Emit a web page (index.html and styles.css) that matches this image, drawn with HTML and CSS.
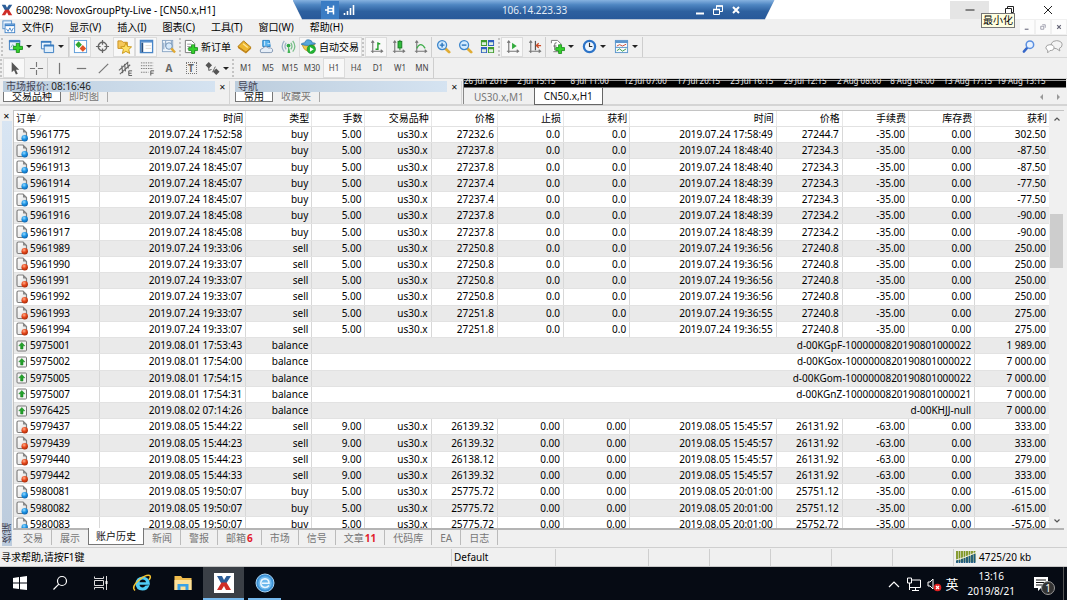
FILE: index.html
```
<!DOCTYPE html>
<html lang="zh-CN">
<head>
    <meta charset="UTF-8">
    <meta name="viewport" content="width=device-width, initial-scale=1.0">
    <title>600298: NovoxGroupPty-Live</title>
    <link rel="stylesheet" href="styles.css">
</head>
<body>
    <!-- shared icons -->
    <svg class="defs" width="0" height="0" aria-hidden="true">
        <defs>
            <radialGradient id="blueBall" cx="40%" cy="30%" r="70%"><stop offset="0" stop-color="#9bdcff"/><stop offset="0.5" stop-color="#1e96e6"/><stop offset="1" stop-color="#0c62ad"/></radialGradient>
            <radialGradient id="redBall" cx="40%" cy="30%" r="70%"><stop offset="0" stop-color="#ffb08c"/><stop offset="0.5" stop-color="#e84a1e"/><stop offset="1" stop-color="#a82806"/></radialGradient>
            <linearGradient id="page" x2="1" y2="1"><stop offset="0" stop-color="#fff"/><stop offset="1" stop-color="#dcdcdc"/></linearGradient>
        </defs>
        <symbol id="doc" viewBox="0 0 12 14">
            <path d="M1 2.500Q1 1 2.500 1H7L10.500 4.500V11.500Q10.500 12.500 9.500 12.500H2.500Q1 12.500 1 11Z" fill="url(#page)" stroke="#808080" stroke-width="1.200"/>
            <path d="M7 1V4.500H10.500Z" fill="#888"/>
        </symbol>
        <symbol id="buy" viewBox="0 0 12 14"><use href="#doc"/><circle cx="8.700" cy="10.300" r="3.200" fill="url(#blueBall)"/></symbol>
        <symbol id="sell" viewBox="0 0 12 14"><use href="#doc"/><circle cx="8.700" cy="10.300" r="3.200" fill="url(#redBall)"/></symbol>
        <symbol id="balance" viewBox="0 0 12 14">
            <rect x="1" y="2" width="9.500" height="10" rx="1" fill="#f4f4f4" stroke="#777"/>
            <path d="M5.800 3.500L8.800 6.800H7V10H4.600V6.800H2.800Z" fill="#23a32b" stroke="#147a1c" stroke-width=".5"/>
        </symbol>
        <symbol id="plus" viewBox="0 0 10 10"><path d="M3.500 .5H6.500V3.500H9.500V6.500H6.500V9.500H3.500V6.500H.5V3.500H3.500Z" fill="#35d02c" stroke="#128a14" stroke-width=".8"/></symbol>
        <symbol id="axes" viewBox="0 0 16 16"><path d="M4 2V13H14M2.500 4L4 2L5.500 4M12.500 11.500L14.500 13L12.500 14.500M2 13H4V15" fill="none" stroke="#777" stroke-width="1.200"/></symbol>
        <symbol id="lens" viewBox="0 0 16 16"><path d="M9.500 9.500L14 14" stroke="#e0ac35" stroke-width="3" stroke-linecap="round"/><circle cx="6.500" cy="6.500" r="4.800" fill="#d4ecff" stroke="#3f87cc" stroke-width="1.400"/></symbol>
        <symbol id="mt" viewBox="0 0 16 16">
            <path d="M1 1H6L8 5L10.500 1H15L10.500 8H5Z" fill="#2b5d98"/>
            <path d="M5.500 7.500H10.500L15 15H10L8 11L5.500 15H1Z" fill="#cf2e28"/>
        </symbol>
    </svg>

    <header class="titlebar">
        <svg class="app-icon" viewBox="0 0 16 16"><use href="#mt"/></svg>
        <span class="title">600298: NovoxGroupPty-Live - [CN50.x,H1]</span>
        <div class="window-buttons">
            <button class="win-btn hover" aria-label="最小化"><svg viewBox="0 0 12 12"><path d="M1.500 6H10.500" stroke="#222"/></svg></button>
            <button class="win-btn" aria-label="还原"><svg viewBox="0 0 12 12"><path d="M2.500 4.500H8.500V10.500H2.500ZM4.500 4V2.500H10.500V8.500H9" fill="none" stroke="#222"/></svg></button>
            <button class="win-btn" aria-label="关闭"><svg viewBox="0 0 12 12"><path d="M2 2L10 10M10 2L2 10" stroke="#222"/></svg></button>
        </div>
        <div class="tooltip">最小化</div>
    </header>

    <div class="remote-bar">
        <div class="remote-inner">
            <button class="pin" aria-label="固定"><svg viewBox="0 0 12 12"><path d="M1 6H4M4 2V10M4 4.500H9V7.500H4M9.500 1.500V10.500" fill="none" stroke="#fff" stroke-width="1.500"/></svg></button>
            <svg class="signal" viewBox="0 0 12 12"><path d="M1.500 9V11M4.500 7V11M7.500 4V11M10.500 1V11" stroke="#fff" stroke-width="1.600"/></svg>
            <span class="remote-ip">106.14.223.33</span>
            <button aria-label="最小化"><svg viewBox="0 0 12 12"><path d="M2 9.500H10" stroke="#fff" stroke-width="2"/></svg></button>
            <button aria-label="还原"><svg viewBox="0 0 12 12"><path d="M1.500 5.500H7.500V10.500H1.500ZM4.500 5V2H10.500V7.500H8" fill="none" stroke="#fff"/><path d="M1 5.500H8M4 2H11" stroke="#fff" stroke-width="1.600"/></svg></button>
            <button aria-label="关闭"><svg viewBox="0 0 12 12"><path d="M3 3L9 9M9 3L3 9" stroke="#fff" stroke-width="2"/></svg></button>
        </div>
    </div>

    <nav class="menubar">
        <svg class="menu-icon" viewBox="0 0 16 16"><rect x="1" y="1" width="10" height="9" fill="#e9f3fd" stroke="#4c8ac9"/><rect x="3.500" y="4.500" width="11" height="10" fill="#fff" stroke="#3c7fc6"/><path d="M3.500 6H14.500" stroke="#3c7fc6" stroke-width="2"/><path d="M5 10L7 13L9 9L11 13L13 9" fill="none" stroke="#3c7fc6"/></svg>
        <a href="#">文件(F)</a>
        <a href="#">显示(V)</a>
        <a href="#">插入(I)</a>
        <a href="#">图表(C)</a>
        <a href="#">工具(T)</a>
        <a href="#">窗口(W)</a>
        <a href="#">帮助(H)</a>
        <div class="mdi-buttons">
            <button aria-label="最小化子窗口"><svg viewBox="0 0 8 8"><path d="M2.500 5.500H5" stroke="#778" stroke-width=".8"/></svg></button>
            <button aria-label="还原子窗口"><svg viewBox="0 0 8 8"><path d="M2.500 3.500H4.500V5.500H2.500ZM3.500 2.500H5.500V4.500" fill="none" stroke="#889" stroke-width=".5"/></svg></button>
            <button aria-label="关闭子窗口"><svg viewBox="0 0 8 8"><path d="M2.800 2.800L5.200 5.200M5.200 2.800L2.800 5.200" stroke="#667" stroke-width=".8"/></svg></button>
        </div>
    </nav>

    <div class="toolbar">
        <span class="grip"></span>
        <button class="drop" aria-label="新图表"><svg viewBox="0 0 16 16"><path d="M1.500 1.500H12.500V11.500H1.500Z" fill="#eaf4fd" stroke="#3a7cc0"/><path d="M1 2.500H13" stroke="#3a7cc0" stroke-width="2"/><path d="M3 9L5 6L7 8" fill="none" stroke="#7aa"/><use href="#plus" x="5" y="4" width="11" height="11"/></svg><i class="caret"></i></button>
        <button class="drop" aria-label="配置文件"><svg viewBox="0 0 16 16"><path d="M1.500 2.500H11.500V10.500H1.500Z" fill="#eaf4fd" stroke="#3a7cc0"/><path d="M4.500 6.500H14.500V14.500H4.500Z" fill="#dfeefb" stroke="#3a7cc0"/><path d="M1 3H12M4 7H15" stroke="#3a7cc0" stroke-width="2"/></svg><i class="caret"></i></button>
        <span class="sep"></span>
        <button class="tool on" aria-label="市场报价"><svg viewBox="0 0 16 16"><rect x="1.500" y="1.500" width="13" height="13" fill="#fff" stroke="#5b9bd8"/><path d="M6 2.500L9.500 6L6 9.500L2.500 6Z" fill="#2fa62f"/><path d="M10.500 6.500L14 10L10.500 13.500L7 10Z" fill="#e05525"/></svg></button>
        <button class="tool" aria-label="数据窗口"><svg viewBox="0 0 16 16"><circle cx="8" cy="8" r="4.500" fill="none" stroke="#666" stroke-width="1.500"/><path d="M8 1V6M8 10V15M1 8H6M10 8H15" stroke="#666" stroke-width="1.300"/></svg></button>
        <button class="tool on" aria-label="导航"><svg viewBox="0 0 16 16"><path d="M1 2H5L6.500 3.500H11V10H1Z" fill="#f6c85a" stroke="#c98f20"/><path d="M9.500 4L11.300 8L15.500 8.400L12.500 11.300L13.500 15.400L9.500 13.200L5.800 15.400L6.700 11.300L3.800 8.400L7.900 8Z" fill="#ffe066" stroke="#c79415"/></svg></button>
        <button class="tool on" aria-label="终端"><svg viewBox="0 0 16 16"><rect x="1.500" y="1.500" width="13" height="13" fill="#fff" stroke="#4a86c8" stroke-width="1.400"/><path d="M2 3H14" stroke="#4a86c8" stroke-width="1.500"/><path d="M2.500 4H4.500V14H2.500Z" fill="#244e80"/><path d="M7 7H13M7 10H13" stroke="#e2ddd5"/></svg></button>
        <button class="tool" aria-label="策略测试"><svg viewBox="0 0 16 16"><rect x="1.500" y="1.500" width="11" height="12" fill="#eef5fc" stroke="#8aa6c4"/><path d="M3 4V11M5 2V8M11 2V6" stroke="#7898ba"/><circle cx="8.500" cy="7.500" r="3.500" fill="#d6e9fa" stroke="#6f8fb2"/><path d="M11 10L15 14.500" stroke="#e0a832" stroke-width="2.500"/></svg></button>
        <span class="grip"></span>
        <button class="wide"><svg viewBox="0 0 16 16"><path d="M2.500 1.500H9L12.500 5V14.500H2.500Z" fill="#fff" stroke="#777"/><path d="M4.500 5.500H9M4.500 8H10M4.500 10.500H8" stroke="#999"/><use href="#plus" x="5.500" y="5.500" width="10.500" height="10.500"/></svg>新订单</button>
        <button class="tool" aria-label="MetaEditor"><svg viewBox="0 0 16 16"><path d="M1 8L7 2L15 9L9.500 14Z" fill="#edb72f" stroke="#a9720f"/><path d="M1 8L9.500 14L15 9V10.500L9.500 15.500L1 9.500Z" fill="#c48415"/><path d="M6.500 5L11.500 9" stroke="#ffe594" stroke-width="1.500"/></svg></button>
        <button class="tool" aria-label="社区"><svg viewBox="0 0 16 16"><path d="M4 1.500H11L12 8H4Z" fill="#57b3ee" stroke="#2b82c4"/><path d="M6 2V7M9 5H12" stroke="#d7efff"/><path d="M2 14.500Q0 11 4 10Q7 6.500 10 9.500Q15 9 14.500 13Q14.300 14.500 12 14.500Z" fill="#e6eef7" stroke="#7e93b0"/></svg></button>
        <button class="tool" aria-label="信号"><svg viewBox="0 0 16 16"><path d="M5.500 11Q3 8 5.500 4M3.500 13.500Q-1 8 3.500 2" fill="none" stroke="#9bb3c6" stroke-width="1.400"/><path d="M10.500 11Q13 8 10.500 4M12.500 13.500Q17 8 12.500 2" fill="none" stroke="#7ac08a" stroke-width="1.400"/><circle cx="8" cy="7" r="2" fill="#2fa845"/><path d="M8 7L10 15H7Z" fill="#45b458"/></svg></button>
        <button class="wide on"><svg viewBox="0 0 16 16"><path d="M1 6Q8 9 15 5L13 9Q11 14 7 13Q3 12 1 6Z" fill="#f0ca49" stroke="#a98420" stroke-width=".6"/><path d="M0 5.500Q2 4 4 4Q5 0 9 1Q12 1.500 12 4Q15 4 15.500 5Q8 8.500 0 5.500Z" fill="#57a8db" stroke="#276fa4" stroke-width=".7"/><circle cx="11" cy="11" r="4.500" fill="#22b534" stroke="#12801f" stroke-width=".6"/><path d="M9.500 8.500L13.500 11L9.500 13.500Z" fill="#fff"/></svg>自动交易</button>
        <span class="grip"></span>
        <button class="tool on" aria-label="柱状图"><svg viewBox="0 0 16 16"><use href="#axes"/><path d="M7 11H9.500V3.500M9.500 5H12" fill="none" stroke="#24a02c" stroke-width="1.500"/></svg></button>
        <button class="tool" aria-label="蜡烛图"><svg viewBox="0 0 16 16"><use href="#axes"/><path d="M9.500 1V12" stroke="#177d20"/><rect x="7.500" y="2.500" width="4" height="7" fill="#2fbb3b" stroke="#177d20"/></svg></button>
        <button class="tool" aria-label="折线图"><svg viewBox="0 0 16 16"><use href="#axes"/><path d="M4 10Q8 2 13 10" fill="none" stroke="#3fae4b" stroke-width="1.300"/></svg></button>
        <span class="sep"></span>
        <button class="tool" aria-label="放大"><svg viewBox="0 0 16 16"><use href="#lens"/><path d="M4 6.500H9M6.500 4V9" stroke="#2c76bd" stroke-width="1.500"/></svg></button>
        <button class="tool" aria-label="缩小"><svg viewBox="0 0 16 16"><use href="#lens"/><path d="M4 6.500H9" stroke="#2c76bd" stroke-width="1.500"/></svg></button>
        <button class="tool" aria-label="平铺窗口"><svg viewBox="0 0 16 16"><path d="M1 1H7.500V7.500H1ZM8.500 8.500H15V15H8.500Z" fill="#3f9b2d"/><path d="M8.500 1H15V7.500H8.500ZM1 8.500H7.500V15H1Z" fill="#2f5fc0"/><path d="M2 3.500H6.500V6.500H2ZM9.500 3.500H14V6.500H9.500ZM2 11H6.500V14H2ZM9.500 11H14V14H9.500Z" fill="#dff0df"/></svg></button>
        <span class="grip"></span>
        <button class="tool on" aria-label="自动滚动"><svg viewBox="0 0 16 16"><use href="#axes"/><path d="M7.500 4L12.500 7.500L7.500 11Z" fill="#33ab3d"/></svg></button>
        <button class="tool" aria-label="图表平移"><svg viewBox="0 0 16 16"><use href="#axes"/><path d="M9 2V12" stroke="#555" stroke-width="1.300"/><path d="M15 7H10M12.500 4.500L10 7L12.500 9.500" fill="none" stroke="#cc4a24" stroke-width="1.400"/></svg></button>
        <span class="sep"></span>
        <button class="drop" aria-label="技术指标"><svg viewBox="0 0 16 16"><path d="M1.500 4.500V1.500H8L11.500 5V13.500H3.500" fill="#fff" stroke="#777"/><path d="M7 4Q5 3.500 5 6V12M3.500 7.500H7" fill="none" stroke="#666"/><use href="#plus" x="5.500" y="5.500" width="10.500" height="10.500"/></svg><i class="caret"></i></button>
        <button class="drop" aria-label="时间周期"><svg viewBox="0 0 16 16"><circle cx="8" cy="8" r="6" fill="#eff7ff" stroke="#2d74c8" stroke-width="2.400"/><path d="M8 4V8H11" fill="none" stroke="#333" stroke-width="1.200"/></svg><i class="caret"></i></button>
        <button class="drop" aria-label="模板"><svg viewBox="0 0 16 16"><rect x="1.500" y="1.500" width="13" height="13" fill="#f5fafe" stroke="#5b95cc"/><path d="M1 3H15" stroke="#5b95cc" stroke-width="2.500"/><path d="M1.500 9H14.500" stroke="#5b95cc"/><path d="M3 7.500L6 6L9 7.500L13 5.500" fill="none" stroke="#c94b35"/><path d="M3 12.500L6 10.500L9 13L13 10.500" fill="none" stroke="#3a9b45"/></svg><i class="caret"></i></button>
        <span class="sep"></span>
        <div class="toolbar-end">
            <button class="tool" aria-label="搜索"><svg viewBox="0 0 16 16"><path d="M6.500 9.500L3 13.500" stroke="#3566c8" stroke-width="2.600" stroke-linecap="round"/><circle cx="9.500" cy="6" r="4" fill="#e8f2ff" stroke="#5b8fe0" stroke-width="1.600"/></svg></button>
            <button class="tool" aria-label="消息"><svg class="chat" viewBox="0 0 20 16"><path d="M7 5Q8 1.500 13 1.500Q19 2 19 6Q19 9 16 10L16.500 13L13 10.500Q8 10.500 7 7Z" fill="#f4f4f4" stroke="#999"/><path d="M1 9Q1.500 6 5.500 6Q10 6 10 9.500Q10 12.500 5.500 12.500L3 15V12Q1 11.500 1 9Z" fill="#fff" stroke="#999"/></svg></button>
        </div>
    </div>

    <div class="toolbar lines">
        <span class="grip"></span>
        <button class="tool on" aria-label="光标"><svg viewBox="0 0 16 16"><path d="M5 1V12L7.500 9.800L9.500 14.500L11.500 13.500L9.500 9.200H13Z" fill="#555"/></svg></button>
        <button class="tool" aria-label="十字线"><svg viewBox="0 0 16 16"><path d="M8 1V6.500M8 9.500V15M1 8H6.500M9.500 8H15" stroke="#777" stroke-width="1.200"/></svg></button>
        <span class="sep"></span>
        <button class="tool" aria-label="垂直线"><svg viewBox="0 0 16 16"><path d="M8 2V14" stroke="#777" stroke-width="1.300"/></svg></button>
        <button class="tool" aria-label="水平线"><svg viewBox="0 0 16 16"><path d="M3 8H13" stroke="#777" stroke-width="1.300"/></svg></button>
        <button class="tool" aria-label="趋势线"><svg viewBox="0 0 16 16"><path d="M3 13L13 3" stroke="#777" stroke-width="1.300"/></svg></button>
        <button class="tool" aria-label="等距通道"><svg viewBox="0 0 16 16"><path d="M1 10L11 1M2 14L13 4M4 5L5 13M7 3L8 11M10 1L11 8" stroke="#666" stroke-width="1.200"/><path d="M15 10.500H11.500V15.500H15M11.500 13H14.500" fill="none" stroke="#555"/></svg></button>
        <button class="tool" aria-label="斐波那契回调线"><svg viewBox="0 0 16 16"><path d="M1 2H14M1 5H14M1 8H14M1 12H9" stroke="#777" stroke-dasharray="1.500 1"/><path d="M15 10.500H11.500V15.500M11.500 13H14.500" fill="none" stroke="#555"/></svg></button>
        <button class="tool letter">A</button>
        <button class="tool letter" aria-label="文字标签"><span class="boxed">T</span></button>
        <button class="drop" aria-label="箭头"><svg viewBox="0 0 16 16"><path d="M4 1L7.500 4.500L4 8L.5 4.500ZM12 8L15.500 11.500L12 15L8.500 11.500Z" fill="#555"/><path d="M4 7V10L7 9M8 12L10 8L11 6" stroke="#555" fill="none"/></svg><i class="caret"></i></button>
        <span class="grip"></span>
        <button class="tool period">M1</button>
        <button class="tool period">M5</button>
        <button class="tool period">M15</button>
        <button class="tool period">M30</button>
        <button class="tool period on">H1</button>
        <button class="tool period">H4</button>
        <button class="tool period">D1</button>
        <button class="tool period">W1</button>
        <button class="tool period">MN</button>
        <span class="sep"></span>
    </div>

    <div class="dock">
        <section class="panel">
            <div class="panel-title"><span>市场报价: <b>08:16:46</b></span><button aria-label="关闭">✕</button></div>
            <div class="panel-tabs">
                <button class="active">交易品种</button><button>即时图</button>
            </div>
        </section>
        <section class="panel">
            <div class="panel-title"><span>导航</span><button aria-label="关闭">✕</button></div>
            <div class="panel-tabs">
                <button class="active">常用</button><button>收藏夹</button>
            </div>
        </section>
        <section class="charts">
            <div class="time-axis">
                <span>26 Jun 2019</span><span>2 Jul 15:15</span><span>8 Jul 11:00</span><span>12 Jul 07:00</span><span>17 Jul 20:15</span><span>23 Jul 16:15</span><span>29 Jul 12:15</span><span>2 Aug 08:00</span><span>8 Aug 04:00</span><span>13 Aug 17:15</span><span>19 Aug 13:15</span>
            </div>
            <div class="chart-tabs">
                <button>US30.x,M1</button><button class="active">CN50.x,H1</button>
                <svg class="chart-scroll" viewBox="0 0 22 8"><path d="M4 1V7L1 4ZM18 1V7L21 4Z" fill="#999"/></svg>
            </div>
        </section>
    </div>

    <main class="terminal">
        <div class="side">
            <button aria-label="关闭终端">✕</button>
            <div class="side-strip"><span>终端</span></div>
        </div>
        <div class="terminal-body">
            <div class="history">
                <div class="table-wrap">
                    <table>
                        <colgroup>
                            <col class="c-order"><col class="c-time"><col class="c-num"><col class="c-lots"><col class="c-num"><col class="c-num"><col class="c-num"><col class="c-num"><col class="c-time"><col class="c-num"><col class="c-num"><col class="c-num"><col class="c-profit">
                        </colgroup>
                        <thead>
                            <tr><th>订单 <small>⁄</small></th><th>时间</th><th>类型</th><th>手数</th><th>交易品种</th><th>价格</th><th>止损</th><th>获利</th><th>时间</th><th>价格</th><th>手续费</th><th>库存费</th><th>获利</th></tr>
                        </thead>
                        <tbody id="orders"></tbody>
                    </table>
                </div>
                <div class="scrollbar">
                    <button aria-label="向上"><svg viewBox="0 0 8 8"><path d="M1.500 5.500L4 3L6.500 5.500" fill="none" stroke="#555" stroke-width="1.200"/></svg></button>
                    <div class="track"><div class="thumb"></div></div>
                    <button aria-label="向下"><svg viewBox="0 0 8 8"><path d="M1.500 2.500L4 5L6.500 2.500" fill="none" stroke="#555" stroke-width="1.200"/></svg></button>
                </div>
            </div>
            <div class="terminal-tabs">
                <button>交易</button><button>展示</button><button class="active">账户历史</button><button>新闻</button><button>警报</button><button>邮箱<b>6</b></button><button>市场</button><button>信号</button><button>文章<b>11</b></button><button>代码库</button><button>EA</button><button>日志</button>
            </div>
        </div>
    </main>

    <footer class="statusbar">
        <span class="help">寻求帮助,请按F1键</span>
        <span class="profile">Default</span>
        <span class="w93"></span><span></span><span></span><span></span><span></span><span></span>
        <span class="traffic"><svg viewBox="0 0 20 12"><path d="M1 0V11M3.500 0V11M6 0V11M8.500 0V11M11 0V11M13.500 0V11M16 0V11M18.500 0V11" stroke="#7d9420" stroke-width="1.800"/><path d="M1 9V12M3.500 9V12M6 8V12M8.500 7V12M11 6V12M13.500 5V12M16 4V12M18.500 3V12" stroke="#1d5a80" stroke-width="1.800"/><path d="M0 9L8 6.500L20 1.500" fill="none" stroke="#eee"/></svg>4725/20 kb</span>
    </footer>

    <div class="taskbar">
        <button aria-label="开始"><svg viewBox="0 0 20 20"><path d="M3 5L9 4V9.500H3ZM10 3.900L17 3V9.500H10ZM3 10.500H9V16L3 15.200ZM10 10.500H17V17L10 16.200Z" fill="#fff"/></svg></button>
        <button aria-label="搜索"><svg viewBox="0 0 20 20"><circle cx="12" cy="8" r="4.500" fill="none" stroke="#fff" stroke-width="1.200"/><path d="M8.800 11.200L3.500 16.500" stroke="#fff" stroke-width="1.200"/></svg></button>
        <button aria-label="任务视图"><svg viewBox="0 0 20 20"><path d="M3.500 3.500V5.500H12.500V3.500M3.500 7.500H12.500V12.500H3.500ZM3.500 16.500V14.500H12.500V16.500M15.500 3V17" fill="none" stroke="#ddd"/><path d="M14.500 8H16.500V11H14.500Z" fill="#fff"/></svg></button>
        <button aria-label="Internet Explorer"><svg viewBox="0 0 20 20"><path d="M17.500 12Q16 17.500 10.500 17.500Q3.500 17 3.500 10.500Q4 4 10.500 3.500Q18 4 18 11.800H7.500Q8 14.500 10.700 14.500Q12.500 14.500 13.200 12.800ZM7.500 9.200H14Q13.500 6.500 10.800 6.500Q8 6.500 7.500 9.200Z" fill="#4fcdf6" fill-rule="evenodd"/><path d="M3 17.500Q-1 14 7 7Q14 1.500 17.500 2.500Q19.500 3.500 17 7" fill="none" stroke="#f5c431" stroke-width="1.500"/></svg></button>
        <button aria-label="文件资源管理器"><svg viewBox="0 0 20 20"><path d="M1.500 3H8L9.500 5H18.500V17H1.500Z" fill="#f0bd4e"/><path d="M1.500 7H18.500V17H1.500Z" fill="#fde19a"/><path d="M4.500 17V11H15.500V17H12.500V13.500H7.500V17Z" fill="#3aa2e6"/></svg></button>
        <button class="active" aria-label="MetaTrader"><svg viewBox="0 0 20 20"><rect width="20" height="20" fill="#fff"/><use href="#mt" x="2" y="2" width="16" height="16"/></svg></button>
        <button class="open" aria-label="浏览器"><svg viewBox="0 0 20 20"><circle cx="10" cy="10" r="9" fill="#3e93d6" stroke="#a8d4f5"/><circle cx="10" cy="10" r="6.800" fill="#6db8ed"/><path d="M14 12.500Q12.500 14.500 10 14.500Q5.800 14 5.800 10Q6 6 10 5.800Q14 6 14 10.300H7" fill="none" stroke="#eaf6ff" stroke-width="1.600"/></svg></button>
        <div class="tray">
            <svg viewBox="0 0 16 16"><path d="M3 11L8 6L13 11" fill="none" stroke="#fff" stroke-width="1.200"/></svg>
            <svg viewBox="0 0 16 16"><path d="M5 4H14.500V11.500H4M9.500 12V14M6 14.500H13M1.500 2V7H5.500V2ZM3.500 7V14" fill="none" stroke="#fff"/></svg>
            <svg viewBox="0 0 16 16"><path d="M2 6H4L7 3V13L4 10H2Z" fill="none" stroke="#fff"/><circle cx="11.500" cy="11.500" r="3.800" fill="#e02020"/><path d="M10 10L13 13M13 10L10 13" stroke="#fff" stroke-width="1.200"/></svg>
            <span class="ime">英</span>
            <span class="clock">13:16<br>2019/8/21</span>
            <span class="notify"><svg viewBox="0 0 16 16"><path d="M1 1H15V12H8L5 15V12H1Z" fill="#fff"/><path d="M3 4H13M3 6.500H13M3 9H9" stroke="#111"/></svg><em>1</em></span>
        </div>
    </div>

    <script src="script.js"></script>
</body>
</html>
```
FILE: styles.css
```
* {
    box-sizing: border-box;
}

body {
    display: flex;
    flex-direction: column;
    height: 100vh;
    margin: 0;
    overflow: hidden;
    background-color: #f0f0f0;
    color: #000;
    font-family: "Noto Sans", "Noto Sans CJK SC", sans-serif;
    font-size: 10px;
    line-height: 16px;
    white-space: nowrap;
}

button {
    display: flex;
    align-items: center;
    justify-content: center;
    padding: 0;
    border: none;
    background: none;
    color: inherit;
    font: inherit;
}

svg {
    flex: none;
    display: block;
}

.defs {
    position: absolute;
}

/* title bar */
.titlebar {
    position: relative;
    display: flex;
    align-items: center;
    flex: none;
    height: 19px;
    background-color: #fff;
}

.app-icon {
    width: 12px;
    height: 12px;
    margin: 0 3px 0 1px;
}

.window-buttons {
    display: flex;
    margin-left: auto;
}

.win-btn {
    width: 39px;
    height: 18px;
}

.win-btn.hover {
    background-color: #e5e5e5;
}

.win-btn svg {
    width: 12px;
    height: 12px;
}

.tooltip {
    position: absolute;
    top: 13px;
    right: 52px;
    z-index: 3;
    padding: 0 1px;
    border: 1px solid #767676;
    background-color: #ffffe1;
    line-height: 13px;
}

/* remote desktop connection bar */
.remote-bar {
    position: absolute;
    top: 0;
    left: 50%;
    z-index: 2;
    width: 482px;
    height: 20px;
    transform: translateX(-50%);
    background-color: #b8c4d4;
    clip-path: polygon(0 0, 100% 0, 98% 100%, 2% 100%);
}

.remote-inner {
    display: flex;
    align-items: center;
    height: 19px;
    padding: 0 30px 0 28px;
    background: linear-gradient(#86b2e0, #4f86c2 25%, #2d609f 60%, #28599a);
    clip-path: polygon(0 0, 100% 0, 98% 100%, 2% 100%);
    color: #e3edf8;
}

.remote-inner svg {
    width: 12px;
    height: 12px;
}

.remote-inner button {
    width: 18px;
    height: 18px;
}

.remote-inner .pin {
    background-color: #3a7cc4;
}

.remote-inner .signal {
    margin-left: 4px;
}

.remote-ip {
    flex: 1;
    padding-left: 24px;
    text-align: center;
}

/* menu */
.menubar {
    display: flex;
    align-items: center;
    flex: none;
    gap: 16px;
    height: 17px;
    padding-left: 2px;
    border-bottom: 1px solid #d2d2d2;
}

.menubar a {
    color: inherit;
    text-decoration: none;
}

.menu-icon {
    width: 14px;
    height: 14px;
    margin-right: -10px;
}

.mdi-buttons {
    display: flex;
    gap: 2px;
    margin: 0 1px 0 auto;
}

.mdi-buttons button {
    width: 14px;
    height: 14px;
    background-color: #fcfcfc;
}

.mdi-buttons svg {
    width: 12px;
    height: 12px;
}

/* toolbars */
.toolbar {
    display: flex;
    align-items: center;
    flex: none;
    height: 21px;
    padding-left: 1px;
}

.toolbar.lines {
    height: 22px;
    padding-left: 0;
    border-top: 1px solid #d8d8d8;
    border-bottom: 1px solid #d0d0d0;
}

.grip {
    width: 2px;
    height: 18px;
    margin-right: 1px;
    border-left: 2px dotted #c4c4c4;
}

.sep {
    width: 1px;
    height: 20px;
    background-color: #cecece;
}

.tool {
    width: 22px;
    height: 20px;
}

.on {
    border: 1px solid #dcdcdc;
    background-color: #f8f8f8;
}

.toolbar svg {
    width: 15px;
    height: 15px;
}

.toolbar svg.chat {
    width: 18px;
}

.drop {
    gap: 3px;
    width: 32px;
}

.lines .drop {
    width: 30px;
}

.caret {
    border: 3px solid transparent;
    border-top-color: #222;
    border-bottom: none;
}

.wide {
    gap: 3px;
    height: 20px;
    padding: 0 2px 0 1px;
}

.toolbar-end {
    display: flex;
    gap: 4px;
    margin: 0 2px 0 auto;
}

.period {
    color: #444;
    font-size: 8px;
}

.letter {
    color: #666;
    font-weight: bold;
}

.boxed {
    width: 11px;
    border: 1px dotted #777;
    line-height: 10px;
}

/* docked panels over the terminal */
.dock {
    display: flex;
    flex: none;
    height: 27px;
    border-bottom: 2px solid #d4d4d4;
}

.panel {
    flex: none;
    width: 228px;
    margin: 2px 0 0 2px;
    padding-left: 1px;
    border-right: 1px solid #d4d4d4;
}

.panel + .panel {
    margin-left: 4px;
}

.panel-title {
    display: flex;
    justify-content: space-between;
    height: 11px;
    line-height: 11px;
}

.panel-title span {
    flex: 1;
    padding-left: 3px;
    background: linear-gradient(90deg, #bccddd, #d5e3f1);
    color: #445;
}

.panel-title b {
    color: #222;
    font-weight: normal;
}

.panel-title button {
    width: 14px;
    font-size: 8px;
    color: #111;
}

.panel-tabs {
    display: flex;
    height: 10px;
    overflow: hidden;
}

.panel-tabs button {
    height: 10px;
    padding: 0 8px 2px;
    border-right: 1px solid #aaa;
    color: #777;
    line-height: 10px;
}

.panel-tabs .active {
    border: 1px solid #777;
    border-top: none;
    background-color: #fff;
    color: #111;
}

.charts {
    flex: 1;
    margin-left: 1px;
    border-left: 1px solid #888;
}

.time-axis {
    display: grid;
    grid-template-columns: repeat(11, 1fr);
    height: 9px;
    margin-right: 1px;
    padding-right: 16px;
    overflow: hidden;
    border-bottom: 1px solid #777;
    background: linear-gradient(#000 1px, #999 1px, #999 2px, #000 2px);
    color: #eee;
    font-size: 8px;
    line-height: 4px;
}

.chart-tabs {
    display: flex;
    align-items: center;
    height: 17px;
}

.chart-tabs button {
    height: 17px;
    padding: 0 10px;
    color: #777;
}

.chart-tabs .active {
    padding: 0 9px;
    border: 1px solid #666;
    border-top: none;
    background-color: #fff;
    color: #111;
}

.chart-scroll {
    width: 22px;
    height: 8px;
    margin: 0 6px 0 auto;
}

/* terminal */
.terminal {
    display: flex;
    flex: 1;
    min-height: 0;
    padding: 4px 3px 1px 0;
}

.side {
    display: flex;
    flex-direction: column;
    flex: none;
    width: 13px;
}

.side button {
    height: 11px;
    font-size: 8px;
}

.side-strip {
    display: flex;
    flex: 1;
    align-items: flex-end;
    margin: 0 1px 0 2px;
    padding-bottom: 3px;
    background: linear-gradient(#d8e5f3, #bccbdc);
    color: #445;
}

.side-strip span {
    line-height: 10px;
    transform: rotate(180deg);
    writing-mode: vertical-rl;
}

.terminal-body {
    display: flex;
    flex: 1;
    flex-direction: column;
    min-width: 0;
}

.history {
    display: flex;
    flex: 1;
    min-height: 0;
    border: 1px solid #c4c4c4;
    border-right: none;
    border-bottom: 2px solid #b4b4b4;
}

.table-wrap {
    flex: 1;
    overflow: hidden;
    background-color: #fff;
}

/* the last row runs a little under the tabs */
table {
    width: 100%;
    height: calc(100% + 5px);
    border-collapse: collapse;
    table-layout: fixed;
}

.c-order {
    width: 85px;
}

.c-time {
    width: 146px;
}

.c-num {
    width: 66px;
}

.c-lots {
    width: 53px;
}

.c-profit {
    width: 74px;
}

th,
td {
    padding: 0 3px 0 0;
    border-right: 1px solid #d8d8d8;
    border-bottom: 1px solid #e2e2e2;
    line-height: 15px;
    font-weight: normal;
    text-align: right;
}

th {
    border-right-color: #e8e8e8;
    padding-right: 2px;
}

th:first-child,
td:first-child {
    padding-left: 2px;
    text-align: left;
}

th:last-child,
td:last-child {
    border-right: none;
}

th small {
    color: #aaa;
    font-size: 8px;
}

tbody tr:nth-child(even) {
    background-color: #eaeaea;
}

.order {
    display: flex;
    align-items: center;
    gap: 2px;
    height: 15px;
}

.order svg {
    width: 12px;
    height: 14px;
}

.scrollbar {
    display: flex;
    flex: none;
    flex-direction: column;
    width: 15px;
}

.scrollbar button {
    height: 15px;
}

.scrollbar svg {
    width: 8px;
    height: 8px;
}

.track {
    flex: 1;
}

.thumb {
    height: 14%;
    margin: 88px 1px 0;
    background-color: #cdcdcd;
}

.terminal-tabs {
    display: flex;
    flex: none;
    height: 16px;
    padding-left: 2px;
}

.terminal-tabs button {
    gap: 1px;
    height: 15px;
    padding: 0 8px;
    border-right: 1px solid #bbb;
    color: #777;
}

.terminal-tabs .active {
    margin: -2px 0 0 -1px;
    height: 17px;
    padding: 0 7px;
    border: 1px solid #777;
    border-top: none;
    background-color: #fff;
    color: #111;
}

.terminal-tabs b {
    color: #e2202c;
}

/* status bar */
.statusbar {
    display: flex;
    align-items: center;
    flex: none;
    height: 20px;
    border-top: 1px solid #cfcfcf;
    border-bottom: 1px solid #c8c8c8;
}

.statusbar span {
    flex: none;
    width: 61px;
    height: 17px;
    padding-left: 2px;
    border-left: 1px solid #cfcfcf;
}

.statusbar .help {
    flex: 1;
    padding-left: 1px;
    border-left: none;
}

.statusbar .profile {
    width: 104px;
}

.statusbar .w93 {
    width: 93px;
}

.statusbar .traffic {
    display: flex;
    align-items: center;
    gap: 3px;
    width: 114px;
}

.traffic svg {
    width: 20px;
    height: 12px;
}

/* taskbar */
.taskbar {
    display: flex;
    flex: none;
    height: 33px;
    background-color: #060b14;
    color: #fff;
}

.taskbar button {
    width: 41px;
    border-bottom: 2px solid transparent;
}

.taskbar button:first-child {
    width: 39px;
}

.taskbar svg {
    width: 20px;
    height: 20px;
}

.taskbar .active {
    border-color: #76b9ed;
    background-color: #3a3f46;
}

.taskbar .open {
    width: 33px;
    margin: 0 4px;
    border-color: #76b9ed;
}

.tray {
    display: flex;
    align-items: center;
    gap: 4px;
    margin-left: auto;
    margin-right: 3px;
    padding-right: 8px;
    border-right: 1px solid #555;
}

.tray svg {
    width: 16px;
    height: 16px;
}

.ime {
    font-size: 13px;
}

.clock {
    margin: 0 14px 0 5px;
    line-height: 15px;
    text-align: center;
}

.notify {
    position: relative;
    width: 22px;
}

.notify em {
    position: absolute;
    top: 5px;
    right: 0;
    width: 14px;
    height: 14px;
    border: 1px solid #999;
    border-radius: 50%;
    background-color: #333;
    line-height: 12px;
    font-style: normal;
    text-align: center;
}
```
FILE: script.js
```
// order, open time, type, lots, open price, stops, close time, close price, fee, profit
const trades = [
    ['5961775', '2019.07.24 17:52:58', 'buy', '5.00', '27232.6', '0.0', '2019.07.24 17:58:49', '27244.7', '-35.00', '302.50'],
    ['5961912', '2019.07.24 18:45:07', 'buy', '5.00', '27237.8', '0.0', '2019.07.24 18:48:40', '27234.3', '-35.00', '-87.50'],
    ['5961913', '2019.07.24 18:45:07', 'buy', '5.00', '27237.8', '0.0', '2019.07.24 18:48:40', '27234.3', '-35.00', '-87.50'],
    ['5961914', '2019.07.24 18:45:07', 'buy', '5.00', '27237.4', '0.0', '2019.07.24 18:48:39', '27234.3', '-35.00', '-77.50'],
    ['5961915', '2019.07.24 18:45:07', 'buy', '5.00', '27237.4', '0.0', '2019.07.24 18:48:39', '27234.3', '-35.00', '-77.50'],
    ['5961916', '2019.07.24 18:45:08', 'buy', '5.00', '27237.8', '0.0', '2019.07.24 18:48:39', '27234.2', '-35.00', '-90.00'],
    ['5961917', '2019.07.24 18:45:08', 'buy', '5.00', '27237.8', '0.0', '2019.07.24 18:48:39', '27234.2', '-35.00', '-90.00'],
    ['5961989', '2019.07.24 19:33:06', 'sell', '5.00', '27250.8', '0.0', '2019.07.24 19:36:56', '27240.8', '-35.00', '250.00'],
    ['5961990', '2019.07.24 19:33:07', 'sell', '5.00', '27250.8', '0.0', '2019.07.24 19:36:56', '27240.8', '-35.00', '250.00'],
    ['5961991', '2019.07.24 19:33:07', 'sell', '5.00', '27250.8', '0.0', '2019.07.24 19:36:56', '27240.8', '-35.00', '250.00'],
    ['5961992', '2019.07.24 19:33:07', 'sell', '5.00', '27250.8', '0.0', '2019.07.24 19:36:56', '27240.8', '-35.00', '250.00'],
    ['5961993', '2019.07.24 19:33:07', 'sell', '5.00', '27251.8', '0.0', '2019.07.24 19:36:55', '27240.8', '-35.00', '275.00'],
    ['5961994', '2019.07.24 19:33:07', 'sell', '5.00', '27251.8', '0.0', '2019.07.24 19:36:55', '27240.8', '-35.00', '275.00'],
    ['5975001', '2019.08.01 17:53:43', 'balance', 'd-00KGpF-1000000820190801000022', '1 989.00'],
    ['5975002', '2019.08.01 17:54:00', 'balance', 'd-00KGox-1000000820190801000022', '7 000.00'],
    ['5975005', '2019.08.01 17:54:15', 'balance', 'd-00KGom-1000000820190801000022', '7 000.00'],
    ['5975007', '2019.08.01 17:54:31', 'balance', 'd-00KGnZ-1000000820190801000021', '7 000.00'],
    ['5976425', '2019.08.02 07:14:26', 'balance', 'd-00KHJJ-null', '7 000.00'],
    ['5979437', '2019.08.05 15:44:22', 'sell', '9.00', '26139.32', '0.00', '2019.08.05 15:45:57', '26131.92', '-63.00', '333.00'],
    ['5979439', '2019.08.05 15:44:23', 'sell', '9.00', '26139.32', '0.00', '2019.08.05 15:45:57', '26131.92', '-63.00', '333.00'],
    ['5979440', '2019.08.05 15:44:23', 'sell', '9.00', '26138.12', '0.00', '2019.08.05 15:45:57', '26131.92', '-63.00', '279.00'],
    ['5979442', '2019.08.05 15:44:33', 'sell', '9.00', '26139.32', '0.00', '2019.08.05 15:45:57', '26131.92', '-63.00', '333.00'],
    ['5980081', '2019.08.05 19:50:07', 'buy', '5.00', '25775.72', '0.00', '2019.08.05 20:01:00', '25751.12', '-35.00', '-615.00'],
    ['5980082', '2019.08.05 19:50:07', 'buy', '5.00', '25775.72', '0.00', '2019.08.05 20:01:00', '25751.12', '-35.00', '-615.00'],
    ['5980083', '2019.08.05 19:50:07', 'buy', '5.00', '25775.72', '0.00', '2019.08.05 20:01:00', '25752.72', '-35.00', '-575.00']
];

function renderRow(row) {
    const type = row[2];
    const first = `<td><div class="order"><svg><use href="#${type}"/></svg>${row[0]}</div></td><td>${row[1]}</td><td>${type}</td>`;
    if (type === 'balance') {
        return `<tr>${first}<td colspan="9">${row[3]}</td><td>${row[4]}</td></tr>`;
    }
    const cells = [row[3], 'us30.x', row[4], row[5], row[5], row[6], row[7], row[8], '0.00', row[9]];
    return `<tr>${first}${cells.map(cell => `<td>${cell}</td>`).join('')}</tr>`;
}

document.getElementById('orders').innerHTML = trades.map(renderRow).join('');
```
